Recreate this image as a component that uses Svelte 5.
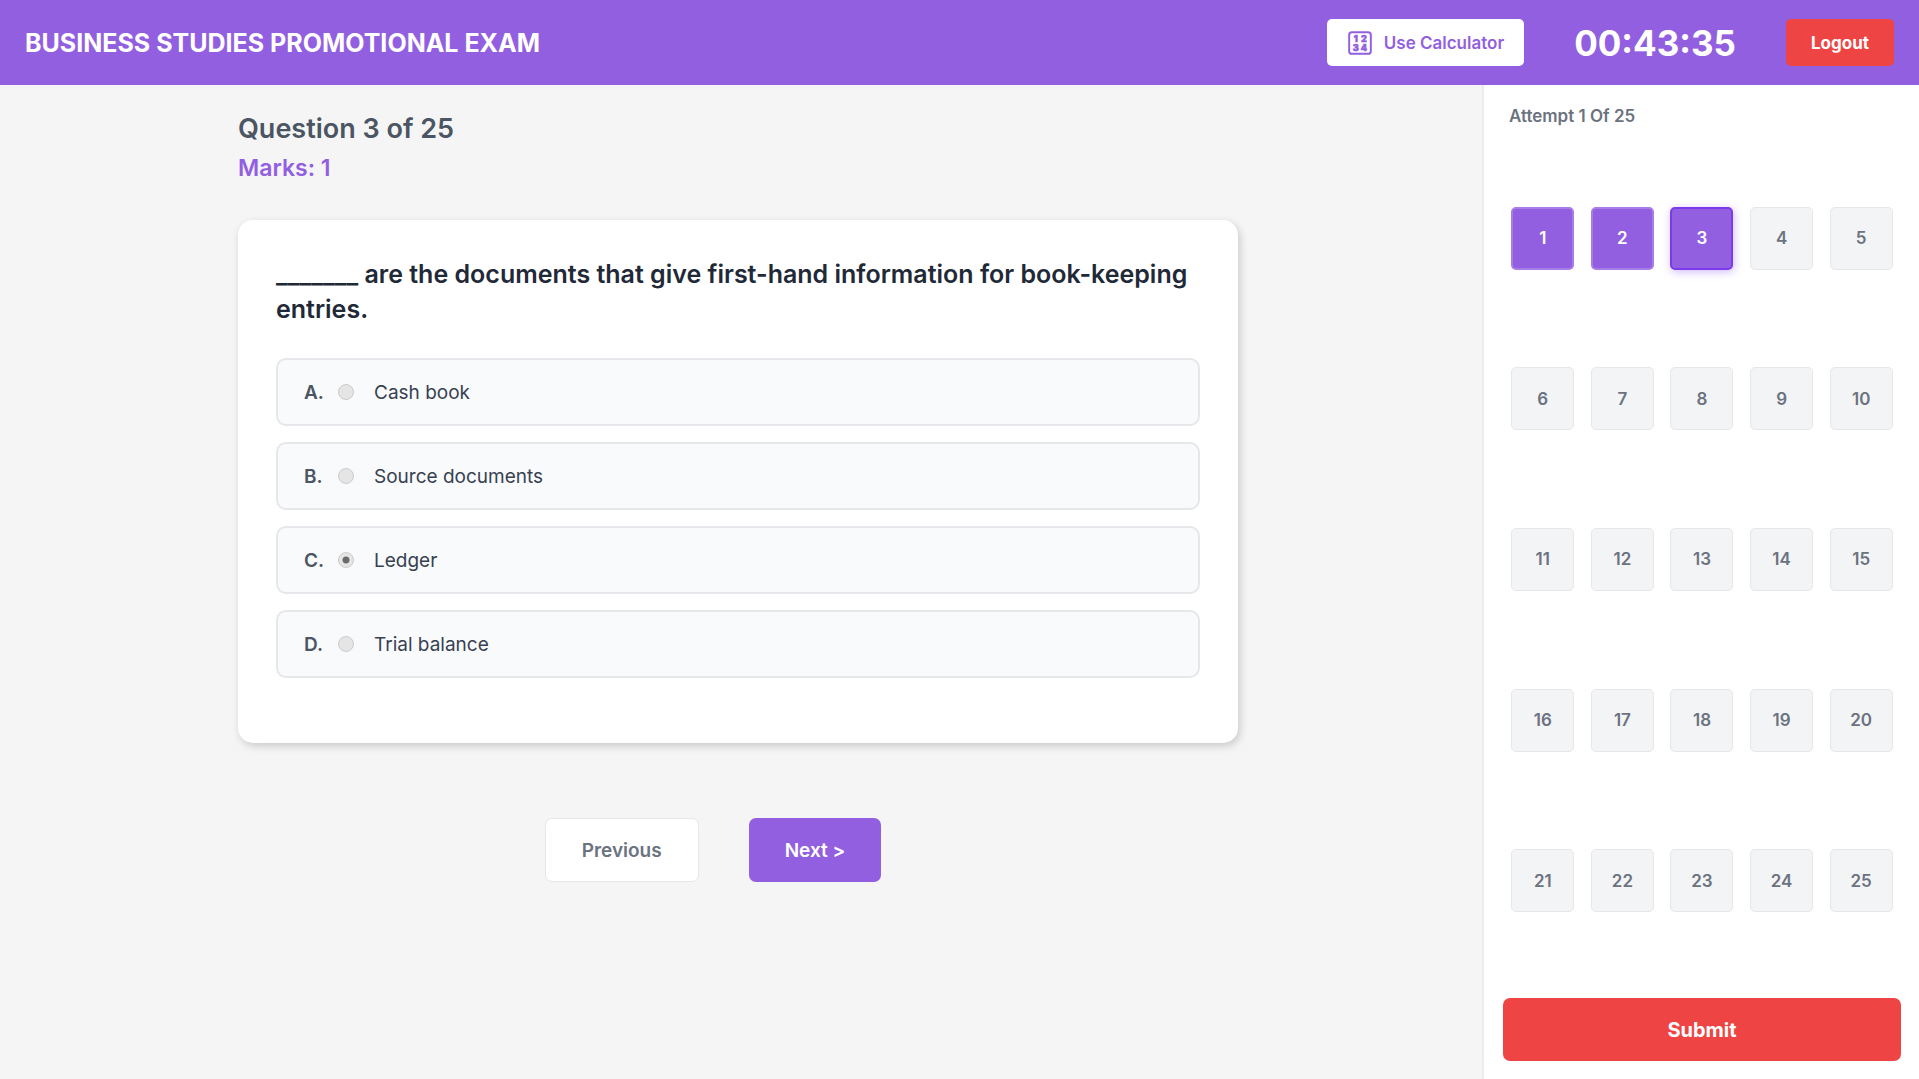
<script>
  const total = 25;
  const options = [
    { key: "A", text: "Cash book" },
    { key: "B", text: "Source documents" },
    { key: "C", text: "Ledger" },
    { key: "D", text: "Trial balance" },
  ];
  const numbers = Array.from({ length: total }, (_, i) => i + 1);

  let current = $state(3);
  let visited = $state([1, 2, 3]);
  let selected = $state("C");

  function goTo(n) {
    if (n < 1 || n > total) return;
    current = n;
    if (!visited.includes(n)) visited.push(n);
  }
</script>

<div class="page">
  <header class="topbar">
    <h1>BUSINESS STUDIES PROMOTIONAL EXAM</h1>
    <div class="actions">
      <button class="calc" type="button">
        <svg viewBox="0 0 24 24" aria-hidden="true">
          <rect x="2" y="2" width="20" height="20" rx="2.5" />
          <text x="8.2" y="11">1</text>
          <text x="15.6" y="11">2</text>
          <text x="8.2" y="19.4">3</text>
          <text x="15.6" y="19.4">4</text>
        </svg>
        Use Calculator
      </button>
      <span class="timer">00:43:35</span>
      <button class="logout" type="button">Logout</button>
    </div>
  </header>

  <div class="body">
    <main>
      <div class="column">
        <h2>Question {current} of {total}</h2>
        <p class="marks">Marks: 1</p>

        <div class="card">
          <p class="question" id="question">
            _______ are the documents that give first-hand information for book-keeping entries.
          </p>
          <div class="options" role="radiogroup" aria-labelledby="question">
            {#each options as option}
              <label class="option">
                <span class="letter">{option.key}.</span>
                <input type="radio" name="answer" value={option.key} bind:group={selected} />
                <span>{option.text}</span>
              </label>
            {/each}
          </div>
        </div>

        <div class="nav">
          <button class="prev" type="button" onclick={() => goTo(current - 1)}>Previous</button>
          <button class="next" type="button" onclick={() => goTo(current + 1)}>Next &gt;</button>
        </div>
      </div>
    </main>

    <aside>
      <p class="attempt">Attempt 1 Of {total}</p>
      <div class="grid">
        {#each numbers as n}
          <button
            type="button"
            class="cell"
            class:visited={visited.includes(n)}
            class:current={n === current}
            onclick={() => goTo(n)}>{n}</button
          >
        {/each}
      </div>
      <button class="submit" type="button">Submit</button>
    </aside>
  </div>
</div>

<style>
  :global(body) {
    margin: 0;
    background: #f5f5f5;
  }
  .page {
    display: flex;
    flex-direction: column;
    min-height: 100vh;
    font-family: Inter, "Liberation Sans", sans-serif;
    color: #1f2937;
  }
  h1,
  h2,
  p {
    margin: 0;
  }
  button {
    font-family: inherit;
    border: none;
    cursor: pointer;
  }

  /* Header */
  .topbar {
    display: flex;
    align-items: center;
    justify-content: space-between;
    padding: 19px 25px;
    background: #935fe1;
    color: #fff;
  }
  h1 {
    font-size: 25px;
    font-weight: 700;
    line-height: 32px;
  }
  .actions {
    display: flex;
    align-items: center;
    gap: 50px;
  }
  .calc,
  .logout {
    height: 47px;
    border-radius: 5px;
  }
  .calc {
    display: flex;
    align-items: center;
    gap: 11px;
    padding: 0 20px;
    background: #fff;
    color: #935fe1;
    font-size: 17px;
    font-weight: 600;
  }
  .calc svg {
    width: 26px;
    height: 26px;
  }
  .calc rect {
    fill: none;
    stroke: currentColor;
    stroke-width: 1.8;
  }
  .calc text {
    fill: currentColor;
    stroke: currentColor;
    stroke-width: 0.6;
    font-size: 8.5px;
    font-weight: 800;
    text-anchor: middle;
  }
  .timer {
    font-size: 35px;
    font-weight: 700;
    line-height: 44px;
  }
  .logout {
    padding: 0 25px;
    background: #ef4444;
    color: #fff;
    font-size: 17px;
    font-weight: 700;
  }

  .body {
    display: flex;
    flex: 1;
  }

  /* Question */
  main {
    flex: 1;
    display: flex;
    justify-content: center;
    padding: 25px 30px 25px 24px;
  }
  .column {
    width: 100%;
    max-width: 1000px;
  }
  h2 {
    font-size: 27px;
    font-weight: 600;
    line-height: 37px;
    color: #4b5563;
  }
  .marks {
    margin-top: 5px;
    font-size: 23px;
    font-weight: 600;
    line-height: 32px;
    color: #935fe1;
  }
  .card {
    margin-top: 36px;
    padding: 37px 38px 65px;
    border-radius: 15px;
    background: #fff;
    box-shadow: 2px 3px 8px rgba(0, 0, 0, 0.18);
  }
  .question {
    font-size: 25px;
    font-weight: 600;
    line-height: 35px;
  }
  .options {
    display: flex;
    flex-direction: column;
    gap: 16px;
    margin-top: 31px;
  }
  .option {
    display: flex;
    align-items: center;
    height: 64px;
    padding: 0 26px;
    border: 2px solid #e5e7eb;
    border-radius: 10px;
    background: #f9fafc;
    font-size: 19px;
    color: #374151;
    cursor: pointer;
  }
  .letter {
    width: 34px;
    font-weight: 600;
    color: #4b5563;
  }
  .option input {
    appearance: none;
    box-sizing: border-box;
    width: 16px;
    height: 16px;
    margin: 0 20px 0 0;
    border: 1px solid #cbcbcb;
    border-radius: 50%;
    background: #e5e5e5;
  }
  .option input:checked {
    background: radial-gradient(circle, #6b6b6b 3px, #e5e5e5 4px);
  }
  .nav {
    display: flex;
    justify-content: center;
    gap: 50px;
    margin: 75px 50px 0 0;
  }
  .prev,
  .next {
    height: 64px;
    padding: 0 36px;
    border-radius: 7px;
    font-size: 19px;
    font-weight: 600;
  }
  .prev {
    border: 1px solid #e5e7eb;
    background: #fff;
    color: #6b7280;
  }
  .next {
    background: #935fe1;
    color: #fff;
  }

  /* Question list */
  aside {
    display: flex;
    flex-direction: column;
    box-sizing: border-box;
    width: 437px;
    padding: 18px 18px 18px 19px;
    border-left: 2px solid #ececee;
    background: #fff;
  }
  .attempt {
    padding: 0 6px;
    font-size: 17px;
    font-weight: 600;
    line-height: 26px;
    color: #6b7280;
  }
  .grid {
    flex: 1;
    display: grid;
    grid-template-columns: repeat(5, 1fr);
    grid-auto-rows: 1fr;
    place-items: center;
    margin: 29px 0 37px;
  }
  .cell {
    box-sizing: border-box;
    width: 63px;
    height: 63px;
    border: 1px solid #e5e7eb;
    border-radius: 5px;
    background: #f3f4f6;
    color: #6b7280;
    font-size: 17px;
    font-weight: 600;
  }
  .cell.visited {
    border: 2px solid #a77de8;
    background: #935fe1;
    color: #fff;
  }
  .cell.current {
    border-color: #7c3aed;
    box-shadow: 1px 2px 8px rgba(124, 58, 237, 0.35);
  }
  .submit {
    height: 63px;
    border-radius: 7px;
    background: #ef4444;
    color: #fff;
    font-size: 20px;
    font-weight: 700;
  }
</style>
